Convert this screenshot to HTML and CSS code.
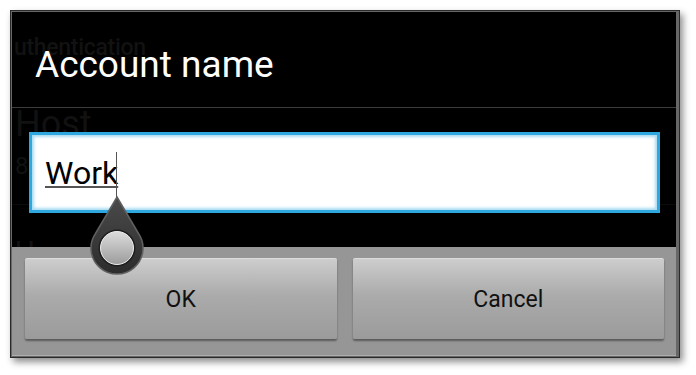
FILE: index.html
```html
<!DOCTYPE html>
<html>
<head>
<meta charset="utf-8">
<link rel="stylesheet" href="styles.css">
</head>
<body>
<div class="frame">
  <div class="panel">
    <div class="ghost">
      <span class="g-auth">uthentication</span>
      <span class="g-host">Host</span>
      <span class="g-port">80</span>
      <span class="g-line"></span>
      <span class="g-user">U</span>
    </div>
    <div class="title">Account name</div>
    <div class="divider"></div>
    <div class="field-row">
      <div class="field"><span class="value">Work</span></div>
    </div>
  </div>
  <div class="bar">
    <button class="btn">OK</button>
    <button class="btn">Cancel</button>
  </div>
  <div class="cursor"></div>
  <svg class="handle" width="60" height="84" viewBox="0 0 60 84">
    <defs>
      <linearGradient id="outer" x1="0" y1="0" x2="0" y2="1">
        <stop offset="0" stop-color="#4a4a4a"/>
        <stop offset="1" stop-color="#2c2c2c"/>
      </linearGradient>
      <linearGradient id="inner" x1="0" y1="0" x2="0" y2="1">
        <stop offset="0" stop-color="#dcdcdc"/>
        <stop offset="1" stop-color="#9c9c9c"/>
      </linearGradient>
    </defs>
    <path d="M30 2 L51.5 38.5 A26 26 0 1 1 8.5 38.5 Z" fill="url(#outer)" stroke="#606060" stroke-width="1.5"/>
    <circle cx="30" cy="53" r="18.5" fill="#1e1e1e"/>
    <circle cx="30" cy="53" r="16.5" fill="url(#inner)" stroke="#eeeeee" stroke-width="1"/>
  </svg>
</div>
</body>
</html>
```
FILE: styles.css
```css
* { box-sizing: border-box; }
html, body { margin: 0; padding: 0; background: #ffffff; }
body { width: 696px; height: 375px; overflow: hidden; font-family: Roboto, "Noto Sans", sans-serif; }

.frame {
  position: relative;
  margin: 10px 0 0 10px;
  width: 670px;
  height: 348px;
  border: 1px solid #2a2a2a;
  padding: 1px 3px 1px 1px;
  background: #676767;
  box-shadow: 3px 4px 7px rgba(0,0,0,0.45);
  display: flex;
  flex-direction: column;
}

.panel {
  position: relative;
  background: #000;
  height: 235px;
  overflow: hidden;
}

.ghost { position: absolute; inset: 0; color: #121212; }
.ghost span { position: absolute; white-space: nowrap; }
.g-auth { left: 2px; top: 22px; font-size: 23px; font-weight: 500; letter-spacing: -0.3px; }
.g-host { left: 3px; top: 91px; font-size: 36px; color: #111; }
.g-port { left: 3px; top: 140px; font-size: 24px; color: #111; }
.g-line { left: 0; right: 0; top: 192px; height: 1px; background: #0b0b0b; }
.g-user { left: 3px; top: 222px; font-size: 30px; color: #121212; }

.title {
  position: relative;
  height: 95px;
  padding: 32px 0 0 23px;
  color: #ffffff;
  font-size: 37px;
  line-height: 42px;
}

.divider { position: relative; height: 1px; background: #3c3c3c; }

.field-row { position: relative; padding: 24px 16px 0 17px; }

.field {
  height: 81px;
  background: #ffffff;
  border: 3px solid #2ea8df;
  box-shadow: inset 0 0 3px 2px #a9dcf3;
  padding: 19px 0 0 13px;
  font-size: 32px;
  line-height: 38px;
  color: #000;
}
.value {
  text-decoration: underline;
  text-decoration-color: #555;
  text-decoration-thickness: 2px;
  text-underline-offset: 2px;
}

.bar {
  flex: 1;
  background: #969696;
  display: flex;
  gap: 16px;
  padding: 11px 12px 16px 13px;
  border-bottom: 1px solid #adadad;
}

.btn {
  flex: 1;
  height: 81px;
  border: none;
  border-top: 1px solid #dcdcdc;
  border-radius: 2px;
  background: linear-gradient(#cdcdcd 0%, #ababab 45%, #9b9b9b 100%);
  box-shadow: 0 2px 2px rgba(0,0,0,0.4);
  font-family: Roboto, "Noto Sans", sans-serif;
  font-size: 23px;
  color: #111;
  padding: 0;
}

.cursor {
  position: absolute;
  left: 105px;
  top: 141px;
  width: 1px;
  height: 48px;
  background: #555;
}

.handle {
  position: absolute;
  left: 76px;
  top: 184px;
}
```
